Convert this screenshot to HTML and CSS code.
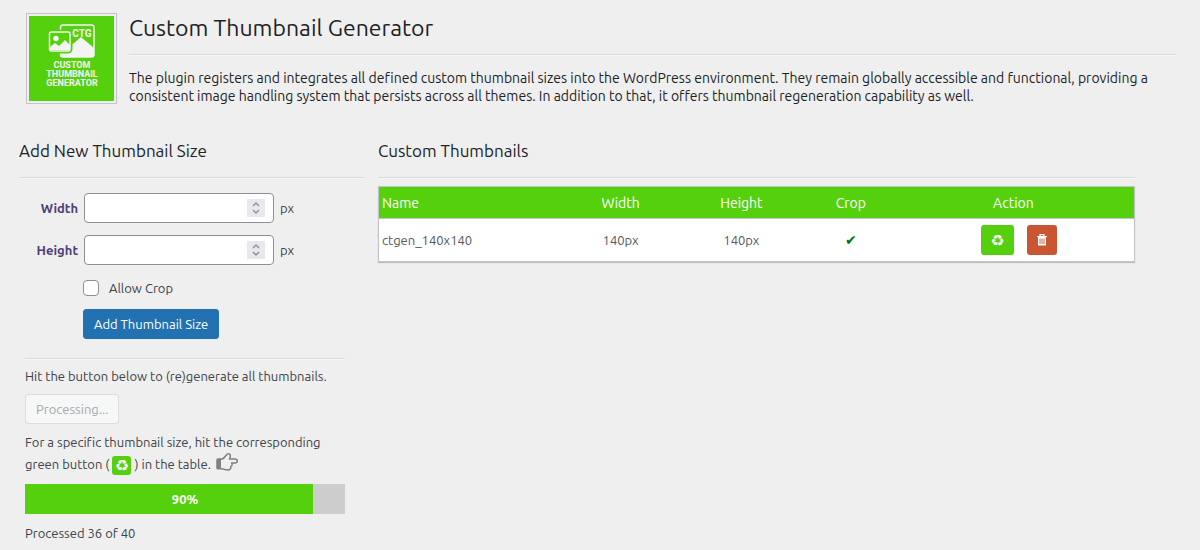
FILE: index.html
```
<!DOCTYPE html>
<html lang="en">

<head>
    <meta charset="UTF-8">
    <meta name="viewport" content="width=device-width, initial-scale=1.0">
    <title>Custom Thumbnail Generator</title>
    <link rel="stylesheet" href="styles.css">
</head>

<body>
    <!-- Plugin header -->
    <header class="plugin-header">
        <svg class="logo" viewBox="0 0 85 85" role="img" aria-label="Custom Thumbnail Generator logo">
            <rect width="85" height="85" fill="#55d00d" />
            <rect x="31.500" y="9" width="33.500" height="32" rx="2.500" fill="none" stroke="#f4f4f4" stroke-width="1.500" />
            <path d="M32 41v-10l8-5 4 2 8-7 13 11v9z" fill="#f4f4f4" />
            <rect x="20" y="15.500" width="21.500" height="20" rx="2.500" fill="#55d00d" stroke="#55d00d" stroke-width="4" />
            <rect x="20.500" y="16" width="20.500" height="19" rx="2" fill="#55d00d" stroke="#f4f4f4" stroke-width="1.500" />
            <circle cx="27" cy="22.500" r="2.700" fill="#f4f4f4" />
            <path d="M21 34v-3l5-4 4 3 6-6 5 5v5z" fill="#f4f4f4" />
            <text class="logo-text" x="53" y="21" font-size="10">CTG</text>
            <text class="logo-text" x="43" y="52" font-size="9">CUSTOM</text>
            <text class="logo-text" x="43" y="61" font-size="9">THUMBNAIL</text>
            <text class="logo-text" x="43" y="70" font-size="9">GENERATOR</text>
        </svg>
        <div class="intro">
            <h1>Custom Thumbnail Generator</h1>
            <hr>
            <p>The plugin registers and integrates all defined custom thumbnail sizes into the WordPress environment. They remain globally accessible and functional, providing a consistent image handling system that persists across all themes. In addition to that, it offers thumbnail regeneration capability as well.</p>
        </div>
    </header>

    <main class="columns">
        <section>
            <h2>Add New Thumbnail Size</h2>
            <hr>
            <!-- New size form -->
            <form class="size-form">
                <div class="form-row">
                    <label for="width">Width</label>
                    <input type="number" id="width" name="width">
                    <span>px</span>
                </div>
                <div class="form-row">
                    <label for="height">Height</label>
                    <input type="number" id="height" name="height">
                    <span>px</span>
                </div>
                <div class="crop-row">
                    <input type="checkbox" id="crop" name="crop">
                    <label for="crop">Allow Crop</label>
                </div>
                <button type="submit" class="button button-primary">Add Thumbnail Size</button>
            </form>

            <!-- Regenerate all -->
            <div class="regenerate">
                <hr>
                <p>Hit the button below to (re)generate all thumbnails.</p>
                <button type="button" class="button" disabled>Processing...</button>
                <p>For a specific thumbnail size, hit the corresponding green button ( <span class="recycle-badge">&#9851;</span> ) in the table.
                    <svg class="hand" viewBox="0 0 22 18" aria-hidden="true">
                        <path d="M1 6h4v10H2c-1 0-1-1-1-1z" fill="#808080" />
                        <path d="M1 7c0-1 .5-1 1-1h4c2-.5 3-2 4-3.500C11 1 11.500.8 12.500.8c2 0 2.500 2 1 5.200H19c3 0 3 4 0 4h-3.500c1 1 .8 3-.7 3.400.5 2-1 3.600-2.800 3.600-3 0-4.500-1-6.500-1.200H2c-.6 0-1-.3-1-.8z" fill="none" stroke="#808080" stroke-width="1.500" stroke-linejoin="round" />
                    </svg>
                </p>
                <div class="progress">
                    <div class="progress-bar" style="width: 90%"></div>
                    <span class="progress-label">90%</span>
                </div>
                <p>Processed 36 of 40</p>
            </div>
        </section>

        <section>
            <h2>Custom Thumbnails</h2>
            <hr>
            <table>
                <thead>
                    <tr>
                        <th class="col-name">Name</th>
                        <th class="col-size">Width</th>
                        <th class="col-size">Height</th>
                        <th class="col-crop">Crop</th>
                        <th class="col-action">Action</th>
                    </tr>
                </thead>
                <tbody>
                    <tr>
                        <td class="col-name">ctgen_140x140</td>
                        <td>140px</td>
                        <td>140px</td>
                        <td class="check">&#10004;</td>
                        <td class="col-action">
                            <div class="actions">
                                <button type="button" class="action recycle" aria-label="Regenerate">&#9851;</button>
                                <button type="button" class="action delete" aria-label="Delete">
                                    <svg viewBox="0 0 12 12" width="12" height="12" aria-hidden="true">
                                        <path d="M1 2.500h10M4 2V.7h4V2" fill="none" stroke="#fff" stroke-width="1.200" />
                                        <path d="M2 3h8v8.500H2z" fill="#fff" />
                                        <path d="M4 4.500v5.500M6 4.500v5.500M8 4.500v5.500" stroke="#ca5533" stroke-width=".9" />
                                    </svg>
                                </button>
                            </div>
                        </td>
                    </tr>
                </tbody>
            </table>
        </section>
    </main>
</body>

</html>
```
FILE: styles.css
```
* {
    box-sizing: border-box;
}

body {
    margin: 0;
    padding: 13px 24px 0 19px;
    background-color: #efefef;
    color: #3c434a;
    font-family: "Ubuntu", "Noto Sans", sans-serif;
    font-size: 13px;
    font-variant-ligatures: none;
    line-height: 22px;
}

h1,
h2 {
    margin: 0;
    color: #1d2327;
    font-weight: 400;
}

h1 {
    font-size: 23px;
    line-height: 30px;
}

h2 {
    font-size: 17px;
    line-height: 24px;
}

p {
    margin: 0;
}

hr {
    margin: 0;
    border: 0;
    border-top: 1px solid #d9d9d9;
    border-bottom: 1px solid #f6f7f7;
}

.plugin-header {
    display: flex;
    gap: 12px;
    padding-left: 7px;
}

.logo {
    flex: none;
    width: 91px;
    height: 91px;
    padding: 2px;
    border: 1px solid #c3c4c7;
}

.logo-text {
    fill: #f4f4f4;
    font-family: "Roboto", sans-serif;
    font-weight: 700;
    text-anchor: middle;
}

.intro {
    flex: 1;
}

.intro hr {
    margin: 11px 0 13px;
}

.intro p {
    color: #1d2327;
    font-size: 14px;
    line-height: 18px;
}

.columns {
    display: grid;
    grid-template-columns: 345px 1fr;
    gap: 14px;
    padding-right: 41px;
    margin-top: 34px;
}

.columns h2 + hr {
    margin: 14px 0 7px;
}

/* Form */
.size-form {
    padding-top: 7px;
}

.form-row {
    display: flex;
    align-items: center;
    gap: 6px;
    margin-bottom: 12px;
}

.form-row label {
    width: 59px;
    color: #50407a;
    font-weight: 700;
    text-align: right;
}

.form-row input {
    width: 190px;
    height: 30px;
    padding: 0 8px;
    border: 1px solid #8c8f94;
    border-radius: 4px;
    background-color: #fff;
    font: inherit;
}

.form-row input::-webkit-inner-spin-button {
    appearance: none;
    width: 18px;
    height: 18px;
    opacity: 1;
    background: #e9e9ed url("data:image/svg+xml,%3Csvg xmlns='http://www.w3.org/2000/svg' viewBox='0 0 18 18'%3E%3Cpath d='M6 7l3-3 3 3M6 11l3 3 3-3' fill='none' stroke='%238f8f9d' stroke-width='1.500'/%3E%3C/svg%3E");
}

.crop-row {
    display: flex;
    align-items: center;
    gap: 10px;
    padding: 0 0 10px 64px;
}

.crop-row input {
    appearance: none;
    width: 16px;
    height: 16px;
    margin: 0;
    border: 1px solid #8c8f94;
    border-radius: 4px;
    background-color: #fff;
}

.button {
    height: 30px;
    padding: 0 10px;
    border: 1px solid #dcdcde;
    border-radius: 3px;
    background-color: #f6f7f7;
    color: #a7aaad;
    font: inherit;
}

.button-primary {
    margin-left: 64px;
    border-color: #2271b1;
    background-color: #2271b1;
    color: #fff;
    cursor: pointer;
}

/* Regenerate */
.regenerate {
    margin: 19px 19px 0 6px;
}

.regenerate hr {
    margin-bottom: 5px;
}

.regenerate .button {
    display: block;
    margin: 7px 0;
}

.recycle-badge {
    display: inline-block;
    width: 19px;
    height: 19px;
    border-radius: 3px;
    background-color: #55d00d;
    color: #fff;
    font-family: "DejaVu Sans", sans-serif;
    font-size: 16px;
    line-height: 19px;
    text-align: center;
    vertical-align: middle;
}

.hand {
    width: 22px;
    height: 18px;
    margin-left: 2px;
    vertical-align: -2px;
}

.progress {
    position: relative;
    height: 30px;
    margin: 9px 0 8px;
    background-color: #cdcdcd;
}

.progress-bar {
    height: 100%;
    background-color: #55d00d;
}

.progress-label {
    position: absolute;
    inset: 0;
    color: #fff;
    font-weight: 700;
    line-height: 30px;
    text-align: center;
}

/* Table */
table {
    width: 100%;
    border: 1px solid #c3c4c7;
    border-spacing: 0;
    background-color: #fff;
    box-shadow: 0 1px 1px rgba(0, 0, 0, 0.2);
    table-layout: fixed;
}

th {
    height: 32px;
    padding: 0 3px;
    border-bottom: 1px solid #c3c4c7;
    background-color: #55d00d;
    color: #fff;
    font-size: 14px;
    font-weight: 400;
}

td {
    height: 42px;
    padding: 0 3px;
    color: #50575e;
    text-align: center;
}

.col-name {
    width: 24%;
    text-align: left;
}

.col-size {
    width: 16%;
}

.col-crop {
    width: 13%;
}

th.col-action {
    padding-right: 10px;
}

.check {
    color: #007017;
    font-family: "DejaVu Sans", sans-serif;
    font-size: 14px;
}

.actions {
    display: flex;
    justify-content: center;
    gap: 13px;
}

td.col-action {
    padding-left: 7px;
}

.action {
    display: flex;
    align-items: center;
    justify-content: center;
    width: 30px;
    height: 30px;
    padding: 0;
    border: 0;
    border-radius: 3px;
    color: #fff;
    cursor: pointer;
}

.recycle {
    width: 33px;
    background-color: #55d00d;
    font-family: "DejaVu Sans", sans-serif;
    font-size: 16px;
}

.delete {
    background-color: #ca5533;
}
```
